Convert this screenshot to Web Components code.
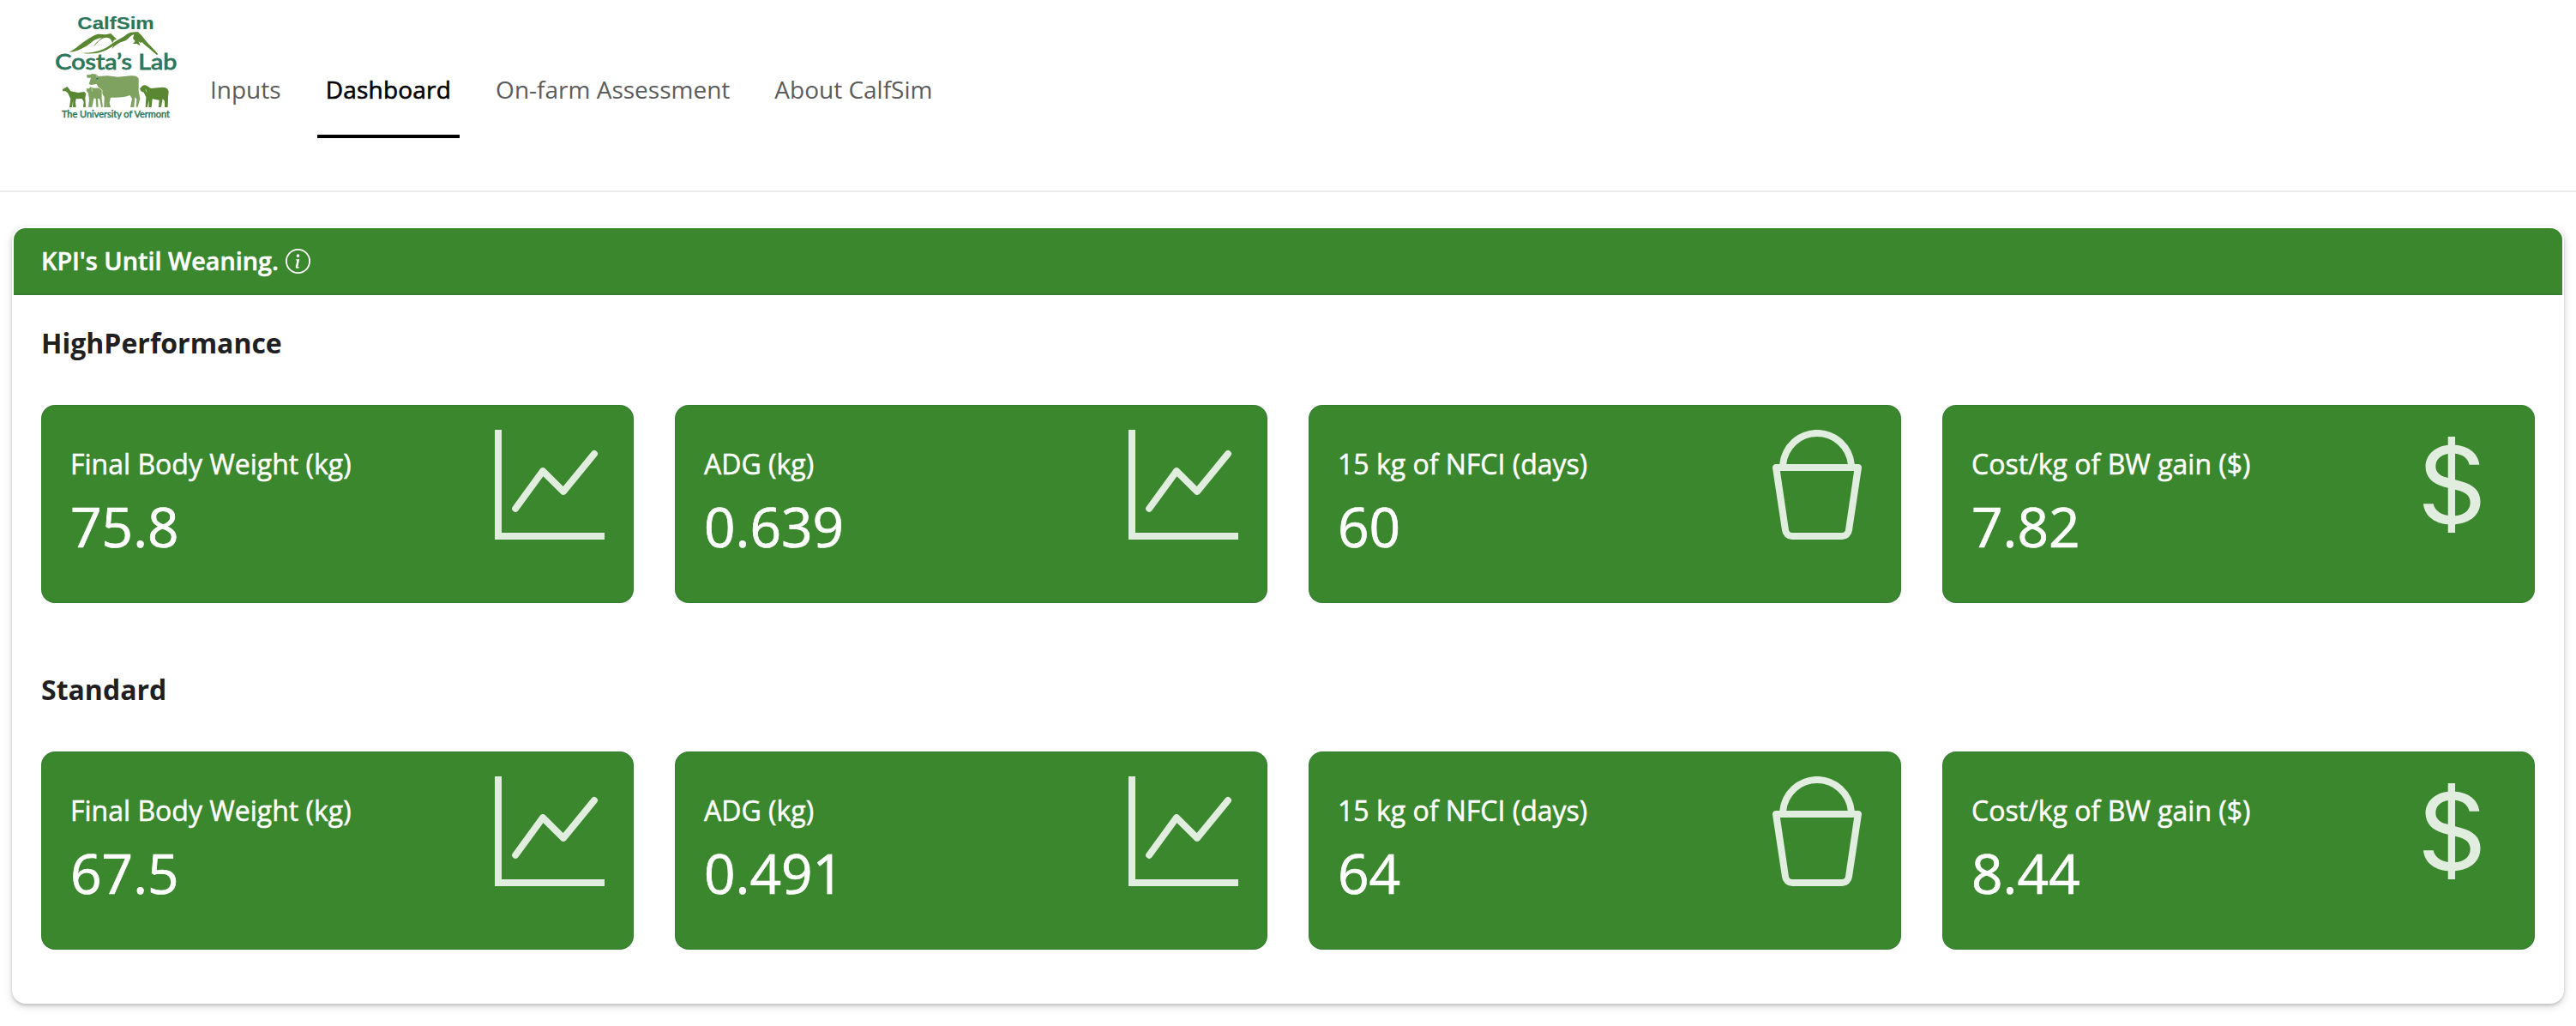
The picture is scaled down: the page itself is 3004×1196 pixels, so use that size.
<!DOCTYPE html>
<html lang="en">
<head>
<meta charset="utf-8">
<title>CalfSim</title>
<style>
  body { margin: 0; background: #fff; font-family: "Open Sans", "Noto Sans", sans-serif; }
</style>
</head>
<body>
<calf-app></calf-app>
<script>
const define = (name, html, setup) => {
  const template = document.createElement('template');
  template.innerHTML = html;
  customElements.define(name, class extends HTMLElement {
    constructor() {
      super();
      this.attachShadow({ mode: 'open' }).append(template.content.cloneNode(true));
    }
    connectedCallback() { if (setup) setup(this, this.shadowRoot); }
  });
};

define('lab-logo', `
<style>
  :host { display: block; width: 170px; height: 150px; }
  svg { display: block; width: 100%; height: 100%; }
</style>
<svg viewBox="0 0 510 450">
  <g fill="#5a8731">
    <path d="M92 182 C118 170 133 151 151 141 C165 132 178 123 192 119 L207 120 L219 121 L238 117 L246 125 L258 137 L249 140 L243 151 L239 141 C232 127 213 131 204 138 C191 145 185 158 177 163 C186 148 198 139 207 133 C180 133 167 154 151 162 C132 173 112 182 92 182Z"/>
    <path d="M137 185 C180 187 215 174 236 157 C259 139 279 134 292 121 C306 111 320 111 333 112 C342 120 351 130 361 144 C374 160 391 172 403 190 L398 192 C382 177 360 161 347 148 L340 149 L334 143 L341 160 L328 153 L315 153 L323 144 L315 134 L319 120 C304 124 300 139 284 144 C266 148 253 158 241 172 L246 160 C225 177 190 194 137 185Z"/>
    <path d="M69 312 L79 307 L85 303 L91 310 L97 319 L124 324 L145 321 L151 328 L148 342 L150 374 L141 375 L143 355 L136 345 L116 346 L114 358 L116 375 L105 375 L106 348 L102 375 L93 375 L97 346 L88 326 L80 319 L70 319Z"/>
    <path d="M339 310 L348 300 Q358 294 367 302 L378 309 L421 305 Q438 306 440 321 L438 341 L437 375 L426 375 L426 353 L419 346 L414 374 L405 375 L407 350 L383 346 L380 375 L370 375 L371 351 L365 375 L359 375 L361 340 L353 323 L343 319Z"/>
  </g>
  <g fill="#7fa260">
    <path d="M153 262 L165 261 L172 258 L188 260 L194 267 L226 265 L262 269 L307 265 Q329 262 335 275 L335 318 L340 345 L332 374 L326 374 L328 347 L322 340 L319 375 L306 375 L312 344 L304 333 Q283 343 237 341 L233 359 L237 375 L225 375 L224 355 L224 375 L214 375 L215 340 L203 320 L188 294 L169 297 L161 294 L168 272 L155 272Z"/>
    <path stroke="#fff" stroke-width="2" d="M151 308 L160 309 L167 303 L177 307 L196 307 L207 315 L207 344 L211 375 L203 376 L198 347 L193 345 L195 375 L186 376 L184 345 L179 345 L173 376 L158 376 L161 348 L157 324 L153 321Z"/>
  </g>
  <path d="M187 262l5 18M170 307l3 13" stroke="#d8e8c9" stroke-width="2"/>
  <path d="M187 272h6v6h-6z" fill="#287858"/>
  <path d="M359 311l4 11" stroke="#a8ca83" stroke-width="3"/>
  <g fill="#2c765a" stroke="#2c765a">
    <text x="121" y="102" stroke-width=".5" font-family="Liberation Sans" font-weight="700" font-size="63" textLength="268" lengthAdjust="spacingAndGlyphs">CalfSim</text>
    <text x="43" y="242" stroke-width="2.5" font-family="Lato" font-weight="400" font-size="73" textLength="426" lengthAdjust="spacingAndGlyphs">Costa’s Lab</text>
    <text x="66" y="411" stroke-width="1.4" font-family="Lato" font-weight="400" font-size="33" textLength="378" lengthAdjust="spacingAndGlyphs">The University of Vermont</text>
  </g>
</svg>`);

define('nav-tab', `
<style>
  :host { display: block; box-sizing: border-box; padding: 0 10px 31px; border-bottom: 4px solid transparent;
          font-size: 28px; line-height: 44px; color: #5c5c5c; white-space: nowrap; }
  :host([active]) { color: #000; border-color: #000; letter-spacing: .22px; -webkit-text-stroke: .6px #000; }
</style>
<slot></slot>`);

define('app-header', `
<style>
  :host { display: flex; box-sizing: border-box; height: 224px; padding-left: 50px; border-bottom: 2px solid #ebebeb; align-items: flex-start; }
  nav { display: flex; gap: 32px; padding: 82px 0 0 15px; }
</style>
<lab-logo></lab-logo>
<nav><slot></slot></nav>`);

define('info-icon', `
<style>
  :host { display: block; width: 29px; height: 29px; }
  svg { display: block; width: 100%; height: 100%; }
</style>
<svg viewBox="0 0 16 16" fill="currentColor">
  <circle cx="8" cy="8" r="7.5" fill="none" stroke="currentColor"/>
  <path d="m8.93 6.588-2.29.287-.082.38.45.083c.294.07.352.176.288.469l-.738 3.468c-.194.897.105 1.319.808 1.319.545 0 1.178-.252 1.465-.598l.088-.416c-.2.176-.492.246-.686.246-.275 0-.375-.193-.304-.533zM9 4.5a1 1 0 1 1-2 0 1 1 0 0 1 2 0"/>
</svg>`);

const ICONS = {
  graph: 'M0 0h1v15h15v1H0zm14.817 3.113a.5.5 0 0 1 .07.704l-4.5 5.5a.5.5 0 0 1-.74.037L7.06 6.767l-3.656 5.027a.5.5 0 0 1-.808-.588l4-5.5a.5.5 0 0 1 .758-.06l2.609 2.61 4.15-5.073a.5.5 0 0 1 .704-.07',
  bucket: 'M2.522 5H2a.5.5 0 0 0-.497.555l1.375 9.11A1.5 1.5 0 0 0 4.36 16h7.28a1.5 1.5 0 0 0 1.482-1.335l1.375-9.11A.5.5 0 0 0 14 5h-.522A5.5 5.5 0 0 0 2.522 5m1.005 0a4.5 4.5 0 0 1 8.946 0zM2.61 6h10.78l-1.26 8.56a.5.5 0 0 1-.49.44H4.36a.5.5 0 0 1-.49-.44z',
  dollar: 'M4 10.781c.148 1.667 1.513 2.85 3.591 3.003V15h1.043v-1.216c2.27-.179 3.678-1.438 3.678-3.3 0-1.59-.947-2.51-2.956-3.028l-.722-.187V3.467c1.122.11 1.879.714 2.07 1.616h1.47c-.166-1.6-1.54-2.748-3.54-2.875V1H7.591v1.233c-1.939.23-3.27 1.472-3.27 3.156 0 1.454.966 2.483 2.661 2.917l.61.162v4.031c-1.149-.17-1.94-.8-2.131-1.718zm3.391-3.836c-1.043-.263-1.6-.825-1.6-1.616 0-.944.704-1.641 1.8-1.828v3.495l-.2-.05zm1.591 1.872c1.287.323 1.852.859 1.852 1.769 0 1.097-.826 1.828-2.2 1.939V8.73z'
};

define('kpi-card', `
<style>
  :host { display: flex; box-sizing: border-box; flex: 1 1 0; min-width: 0; height: 231px; padding: 0 33px;
          justify-content: space-between; align-items: flex-start;
          background: #3b872e; border: 1px solid rgba(40, 90, 70, .22); border-radius: 16px; color: #fff; }
  .label { padding-top: 43px; font-size: 32px; line-height: 50px; white-space: nowrap; -webkit-text-stroke: .5px #fff; }
  .value { margin-top: 9px; font-size: 64px; line-height: 77px; -webkit-text-stroke: .7px #fff; }
  svg { display: block; flex: none; width: 128px; height: 128px; margin-top: 28px; opacity: .85; }
</style>
<div><div class="label"></div><div class="value"></div></div>
<svg viewBox="0 0 16 16" fill="currentColor"><path/></svg>`, (host, root) => {
  root.querySelector('.label').textContent = host.getAttribute('label');
  root.querySelector('.value').textContent = host.getAttribute('value');
  root.querySelector('path').setAttribute('d', ICONS[host.getAttribute('icon')]);
});

define('kpi-group', `
<style>
  :host { display: block; }
  h2 { margin: 0 0 50px; font-size: 32px; line-height: 44px; font-weight: 700; color: #1f2022; }
  .cards { display: flex; gap: 48px; }
</style>
<h2><slot name="title"></slot></h2>
<div class="cards"><slot></slot></div>`);

define('kpi-panel', `
<style>
  :host { display: block; box-sizing: border-box; margin: 40px 14px 0; height: 906px; padding: 2px; background: #fff;
          border-radius: 16px; box-shadow: 0 3px 10px rgba(0, 0, 0, .18), 0 2px 3px rgba(0, 0, 0, .12); }
  header { display: flex; box-sizing: border-box; height: 78px; padding: 0 32px; align-items: center; gap: 8px;
           background: #3b872e; border-bottom: 2px solid rgba(40, 90, 70, .22); border-radius: 14px 14px 0 0; color: #fff;
           font-size: 28.8px; line-height: 44px; font-weight: 600; }
  header slot { -webkit-text-stroke: .5px #fff; }
  .body { display: flex; flex-direction: column; gap: 79px; padding: 34px 32px 0; }
</style>
<header><slot name="title"></slot><info-icon></info-icon></header>
<div class="body"><slot></slot></div>`);

define('calf-app', `
<style>
  :host { display: flow-root; min-height: 1196px; }
</style>
<app-header>
  <nav-tab>Inputs</nav-tab>
  <nav-tab active>Dashboard</nav-tab>
  <nav-tab>On-farm Assessment</nav-tab>
  <nav-tab>About CalfSim</nav-tab>
</app-header>
<kpi-panel>
  <span slot="title">KPI's Until Weaning.</span>
  <kpi-group>
    <span slot="title">HighPerformance</span>
    <kpi-card label="Final Body Weight (kg)" value="75.8" icon="graph"></kpi-card>
    <kpi-card label="ADG (kg)" value="0.639" icon="graph"></kpi-card>
    <kpi-card label="15 kg of NFCI (days)" value="60" icon="bucket"></kpi-card>
    <kpi-card label="Cost/kg of BW gain ($)" value="7.82" icon="dollar"></kpi-card>
  </kpi-group>
  <kpi-group>
    <span slot="title">Standard</span>
    <kpi-card label="Final Body Weight (kg)" value="67.5" icon="graph"></kpi-card>
    <kpi-card label="ADG (kg)" value="0.491" icon="graph"></kpi-card>
    <kpi-card label="15 kg of NFCI (days)" value="64" icon="bucket"></kpi-card>
    <kpi-card label="Cost/kg of BW gain ($)" value="8.44" icon="dollar"></kpi-card>
  </kpi-group>
</kpi-panel>`);
</script>
</body>
</html>
